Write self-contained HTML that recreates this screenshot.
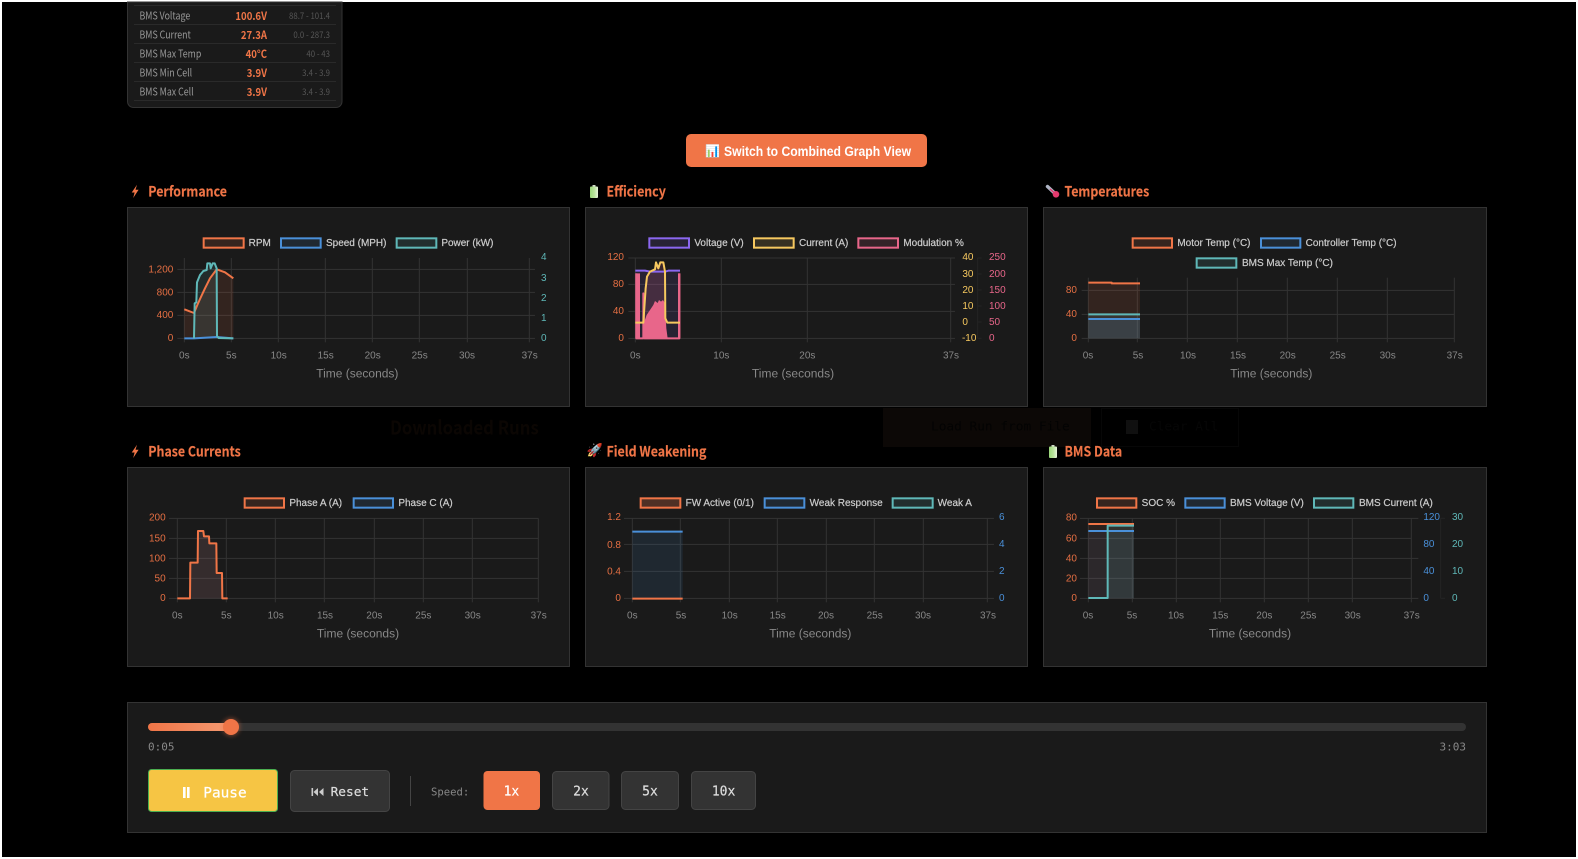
<!DOCTYPE html>
<html><head><meta charset="utf-8"><title>Dashboard</title>
<style>
html,body{margin:0;padding:0;background:#fff;width:1578px;height:859px;overflow:hidden}
svg{position:absolute;left:0;top:0;display:block}
text{font-family:"Liberation Sans",sans-serif;dominant-baseline:central}
.g line{stroke:#333;stroke-width:3}
.g .f{stroke:#242424}
.lg,.t,.lo,.ry,.rp,.rt,.rb{transform:translateY(3px)}
.lg{font-size:30px;fill:#ccc;stroke:#ccc;stroke-width:.6px}
.t{font-size:30px;fill:#888;text-anchor:middle}
.ti{font-size:36px;fill:#888;text-anchor:middle}
.lo{font-size:30px;fill:#e56f43;text-anchor:end}
.ry{font-size:30px;fill:#f6c85f}
.rp{font-size:30px;fill:#e8668a}
.rt{font-size:30px;fill:#5fb8b8}
.rb{font-size:30px;fill:#4a90d9}
.h{font-family:"Noto Sans CJK SC","Liberation Sans",sans-serif;font-size:14px;font-weight:700;fill:#f07547;stroke:#f07547;stroke-width:.15px}
.e{font-family:"Noto Color Emoji","Liberation Sans",sans-serif;font-size:13px}
.s{font-family:"Noto Sans CJK SC","Liberation Sans",sans-serif;font-size:10.500px;fill:#999}
.v{font-family:"Noto Sans CJK SC","Liberation Sans",sans-serif;font-size:11px;font-weight:700;fill:#f07547;text-anchor:end}
.r{font-family:"Noto Sans CJK SC","Liberation Sans",sans-serif;font-size:9px;fill:#555;text-anchor:end}
.m{font-family:"DejaVu Sans Mono",monospace}
.l{fill:none;stroke-width:6;stroke-linejoin:round}
</style></head><body>
<svg width="1578" height="859" viewBox="0 0 1578 859" xmlns="http://www.w3.org/2000/svg">
<defs>
<linearGradient id="f" x1="0" x2="1" y1="0" y2="0"><stop offset="0" stop-color="#f07547"/><stop offset="1" stop-color="#f49a72"/></linearGradient>
<linearGradient id="bat" x1="0" x2="1" y1="0" y2="0"><stop offset="0" stop-color="#9bd77a"/><stop offset=".55" stop-color="#b9e49c"/><stop offset="1" stop-color="#e8f3dd"/></linearGradient>
<filter id="gl" x="-50%" y="-50%" width="200%" height="200%"><feGaussianBlur stdDeviation="2"/></filter>
</defs>
<rect x="2" y="2" width="1574" height="855" fill="#000"/>

<!-- faint layer -->
<g>
<text transform="translate(390,427) scale(.88,1)" x="0" y="0" style="font-size:19px;fill:#0b0603;font-family:'Noto Sans CJK SC',sans-serif;font-weight:600">Downloaded Runs</text>
<rect x="883" y="408" width="208" height="39" fill="#0c0806"/>
<text x="931" y="427" class="m" style="font-size:12.800px;fill:#030303">Load Run from File</text>
<rect x="1101.500" y="408.500" width="137" height="38" fill="none" stroke="#070707"/>
<text x="1149" y="427" class="m" style="font-size:12.800px;fill:#060606">Clear All</text>
<rect x="1126" y="420" width="12" height="14" fill="#101010"/>
</g>

<!-- top stats panel -->
<path d="M127.500 2V101.500a6 6 0 0 0 6 6H336a6 6 0 0 0 6-6V2Z" fill="#1a1a1a" stroke="#333"/>
<g stroke="#2a2a2a"><line x1="134" x2="336" y1="5.500" y2="5.500"/><line x1="134" x2="336" y1="24.500" y2="24.500"/><line x1="134" x2="336" y1="43.500" y2="43.500"/><line x1="134" x2="336" y1="62.500" y2="62.500"/><line x1="134" x2="336" y1="81.500" y2="81.500"/><line x1="134" x2="336" y1="100.500" y2="100.500"/></g>
<g transform="translate(139.500,-1) scale(.84,1)"><text class="s" x="0" y="16">BMS Voltage</text><text class="s" x="0" y="35">BMS Current</text><text class="s" x="0" y="54">BMS Max Temp</text><text class="s" x="0" y="73">BMS Min Cell</text><text class="s" x="0" y="92">BMS Max Cell</text></g>
<g transform="translate(267,-1) scale(.87,1)"><text class="v" x="0" y="16">100.6V</text><text class="v" x="0" y="35">27.3A</text><text class="v" x="0" y="54">40°C</text><text class="v" x="0" y="73">3.9V</text><text class="v" x="0" y="92">3.9V</text></g>
<g transform="translate(330,0) scale(.87,1)"><text class="r" x="0" y="16">88.7 - 101.4</text><text class="r" x="0" y="35">0.0 - 287.3</text><text class="r" x="0" y="54">40 - 43</text><text class="r" x="0" y="73">3.4 - 3.9</text><text class="r" x="0" y="92">3.4 - 3.9</text></g>

<!-- switch button -->
<rect x="686" y="134" width="241" height="33" rx="5" fill="#f07547"/>
<text class="e" x="705" y="151" style="font-size:12px">📊</text>
<text transform="translate(724,151) scale(.87,1)" x="0" y="0" style="font-size:14px;font-weight:700;fill:#fff">Switch to Combined Graph View</text>

<!-- section titles -->
<path d="M137 184.700L131.700 192.500H134.600L133.200 198L138.600 189.700H135.500Z" fill="#f07547"/>
<text class="h" x="0" y="0" transform="translate(148.300,190.500) scale(.885,1)">Performance</text>
<rect x="592.500" y="185" width="3" height="2" fill="#cfd8c8"/><rect x="590" y="186.500" width="8" height="11.500" rx="1" fill="url(#bat)"/>
<text class="h" x="0" y="0" transform="translate(606.500,190.500) scale(.885,1)">Efficiency</text>
<line x1="1047.500" y1="186.500" x2="1055" y2="193.500" stroke="#aeb4c4" stroke-width="3.400" stroke-linecap="round"/><line x1="1050" y1="189" x2="1055" y2="193.500" stroke="#e33a6e" stroke-width="1.400"/><circle cx="1056" cy="194.300" r="3.300" fill="#e33a6e"/>
<text class="h" x="0" y="0" transform="translate(1064.500,190.500) scale(.885,1)">Temperatures</text>
<path d="M137 444.700L131.700 452.500H134.600L133.200 458L138.600 449.700H135.500Z" fill="#f07547"/>
<text class="h" x="0" y="0" transform="translate(148.300,450.500) scale(.885,1)">Phase Currents</text>
<text class="e" x="586.500" y="451">🚀</text>
<text class="h" x="0" y="0" transform="translate(606.500,450.500) scale(.885,1)">Field Weakening</text>
<rect x="1051.500" y="445" width="3" height="2" fill="#cfd8c8"/><rect x="1049" y="446.500" width="8" height="11.500" rx="1" fill="url(#bat)"/>
<text class="h" x="0" y="0" transform="translate(1064.500,450.500) scale(.885,1)">BMS Data</text>

<!-- panels -->
<g fill="#1a1a1a" stroke="#333">
<rect x="127.500" y="207.500" width="442" height="199"/><rect x="585.500" y="207.500" width="442" height="199"/><rect x="1043.500" y="207.500" width="443" height="199"/>
<rect x="127.500" y="467.500" width="442" height="199"/><rect x="585.500" y="467.500" width="442" height="199"/><rect x="1043.500" y="467.500" width="443" height="199"/>
</g>

<!-- chart 1 -->
<g transform="translate(120,175) scale(.33333)">
<g class="g"><line x1="193" x2="193" y1="249" y2="502"/><line x1="334" x2="334" y1="249" y2="502"/><line x1="475" x2="475" y1="249" y2="502"/><line x1="616" x2="616" y1="249" y2="502"/><line x1="757" x2="757" y1="249" y2="502"/><line x1="898" x2="898" y1="249" y2="502"/><line x1="1042" x2="1042" y1="249" y2="502"/><line x1="1228" x2="1228" y1="249" y2="502"/>
<line x1="172" x2="1245" y1="283" y2="283"/><line x1="172" x2="1245" y1="352" y2="352"/><line x1="172" x2="1245" y1="421" y2="421"/><line x1="172" x2="1245" y1="490" y2="490"/></g>
<rect x="251" y="190" width="120" height="28" fill="#f07547" fill-opacity=".13" stroke="#f07547" stroke-width="6"/><text class="lg" x="386" y="203">RPM</text>
<rect x="483" y="190" width="119" height="28" fill="#4a90d9" fill-opacity=".13" stroke="#4a90d9" stroke-width="6"/><text class="lg" x="618" y="203">Speed (MPH)</text>
<rect x="830" y="190" width="119" height="28" fill="#5fb8b8" fill-opacity=".13" stroke="#5fb8b8" stroke-width="6"/><text class="lg" x="964" y="203">Power (kW)</text>
<path d="M193 490V403L222 414L232 390L255 340L290 283L315 292L340 310V490Z" fill="#f07547" fill-opacity=".12"/>
<path d="M222 490L224 385L229 382L231 322L240 300L250 288L260 285V265H270V280L278 265H284L290 280L291 490Z" fill="#5fb8b8" fill-opacity=".12"/>
<path class="l" stroke="#f07547" d="M193 403L222 414L232 390L240 372L255 340L270 310L290 283L315 292L340 310"/>
<path class="l" stroke="#4a90d9" d="M193 490H222L290 486L340 490"/>
<path class="l" stroke="#5fb8b8" d="M222 490L224 385L229 382L231 322L240 300L250 288L260 285L262 265H270L272 280L278 265H284L290 280L291 483L296 489L340 490"/>
<text class="lo" x="160" y="282">1,200</text><text class="lo" x="160" y="351">800</text><text class="lo" x="160" y="419">400</text><text class="lo" x="160" y="488">0</text>
<text class="rt" x="1263" y="245">4</text><text class="rt" x="1263" y="308">3</text><text class="rt" x="1263" y="368">2</text><text class="rt" x="1263" y="428">1</text><text class="rt" x="1263" y="487">0</text>
<text class="t" x="193" y="540">0s</text><text class="t" x="334" y="540">5s</text><text class="t" x="476" y="540">10s</text><text class="t" x="617" y="540">15s</text><text class="t" x="758" y="540">20s</text><text class="t" x="899" y="540">25s</text><text class="t" x="1041" y="540">30s</text><text class="t" x="1229" y="540">37s</text>
<text class="ti" x="712" y="596">Time (seconds)</text>
</g>

<!-- chart 2 -->
<g transform="translate(575,175) scale(.33333)">
<g class="g"><line x1="181" x2="181" y1="249" y2="502"/><line x1="439" x2="439" y1="249" y2="502"/><line x1="697" x2="697" y1="249" y2="502"/><line x1="1127" x2="1127" y1="249" y2="502"/>
<line x1="160" x2="1140" y1="249" y2="249"/><line x1="160" x2="1140" y1="328" y2="328"/><line x1="160" x2="1140" y1="409" y2="409"/><line x1="160" x2="1140" y1="490" y2="490"/>
<line class="f" x1="1208" x2="1220" y1="249" y2="249"/><line class="f" x1="1208" x2="1220" y1="297" y2="297"/><line class="f" x1="1208" x2="1220" y1="345" y2="345"/><line class="f" x1="1208" x2="1220" y1="393" y2="393"/><line class="f" x1="1208" x2="1220" y1="441" y2="441"/><line class="f" x1="1208" x2="1220" y1="490" y2="490"/><line class="f" x1="1208" x2="1208" y1="249" y2="490"/></g>
<rect x="223" y="190" width="119" height="28" fill="#8b67f0" fill-opacity=".13" stroke="#8b67f0" stroke-width="6"/><text class="lg" x="358" y="203">Voltage (V)</text>
<rect x="537" y="190" width="119" height="28" fill="#f6c85f" fill-opacity=".13" stroke="#f6c85f" stroke-width="6"/><text class="lg" x="672" y="203">Current (A)</text>
<rect x="850" y="190" width="119" height="28" fill="#e8668a" fill-opacity=".13" stroke="#e8668a" stroke-width="6"/><text class="lg" x="985" y="203">Modulation %</text>
<path d="M181 287H315V490H181Z" fill="#8b67f0" fill-opacity=".12"/>
<path d="M208 490V340L216 305L225 290L240 283L243 262L250 280L256 262H265L270 290L272 490Z" fill="#e8668a" fill-opacity=".16"/>
<path d="M206 490L208 440L215 420L225 405L235 390L240 378L248 384L252 375L258 380L264 375L270 385L274 460L278 490Z" fill="#e8668a"/>
<path class="l" stroke="#e8668a" d="M184 295V490H205V355L208 490H278L281 490H313V295"/>
<path d="M181 295H195V490H181Z" fill="#e8668a"/>
<path d="M309 295H316V490H309Z" fill="#e8668a"/>
<path class="l" stroke="#8b67f0" d="M181 287H210L225 290H270L280 287H315"/>
<path class="l" stroke="#f6c85f" d="M181 443H205L212 340L216 305L225 290L240 283L243 262L250 280L256 262H265L270 290L271 430L277 443H315"/>
<text class="lo" x="147" y="245">120</text><text class="lo" x="147" y="326">80</text><text class="lo" x="147" y="407">40</text><text class="lo" x="147" y="488">0</text>
<text class="ry" x="1162" y="245">40</text><text class="ry" x="1162" y="296">30</text><text class="ry" x="1162" y="344">20</text><text class="ry" x="1162" y="392">10</text><text class="ry" x="1162" y="440">0</text><text class="ry" x="1161" y="488">-10</text>
<text class="rp" x="1242" y="245">250</text><text class="rp" x="1242" y="296">200</text><text class="rp" x="1242" y="344">150</text><text class="rp" x="1242" y="392">100</text><text class="rp" x="1242" y="440">50</text><text class="rp" x="1242" y="488">0</text>
<text class="t" x="181" y="540">0s</text><text class="t" x="439" y="540">10s</text><text class="t" x="697" y="540">20s</text><text class="t" x="1128" y="540">37s</text>
<text class="ti" x="654" y="596">Time (seconds)</text>
</g>

<!-- chart 3 -->
<g transform="translate(1030,175) scale(.33333)">
<g class="g"><line x1="175" x2="175" y1="308" y2="502"/><line x1="322" x2="322" y1="308" y2="502"/><line x1="472" x2="472" y1="308" y2="502"/><line x1="622" x2="622" y1="308" y2="502"/><line x1="772" x2="772" y1="308" y2="502"/><line x1="922" x2="922" y1="308" y2="502"/><line x1="1072" x2="1072" y1="308" y2="502"/><line x1="1273" x2="1273" y1="308" y2="502"/>
<line x1="155" x2="1273" y1="346" y2="346"/><line x1="155" x2="1273" y1="418" y2="418"/><line x1="155" x2="1273" y1="490" y2="490"/></g>
<rect x="308" y="190" width="118" height="28" fill="#f07547" fill-opacity=".13" stroke="#f07547" stroke-width="6"/><text class="lg" x="442" y="203">Motor Temp (°C)</text>
<rect x="693" y="190" width="118" height="28" fill="#4a90d9" fill-opacity=".13" stroke="#4a90d9" stroke-width="6"/><text class="lg" x="827" y="203">Controller Temp (°C)</text>
<rect x="500" y="250" width="119" height="28" fill="#5fb8b8" fill-opacity=".13" stroke="#5fb8b8" stroke-width="6"/><text class="lg" x="636" y="263">BMS Max Temp (°C)</text>
<path d="M175 323H330V490H175Z" fill="#f07547" fill-opacity=".12"/>
<path d="M175 418H330V490H175Z" fill="#5fb8b8" fill-opacity=".12"/>
<path d="M175 432H330V490H175Z" fill="#4a90d9" fill-opacity=".12"/>
<path class="l" stroke="#f07547" d="M175 323H245V325H330"/>
<path class="l" stroke="#5fb8b8" d="M175 418H330"/>
<path class="l" stroke="#4a90d9" d="M175 432H330"/>
<text class="lo" x="141" y="344">80</text><text class="lo" x="141" y="416">40</text><text class="lo" x="141" y="488">0</text>
<text class="t" x="174" y="540">0s</text><text class="t" x="324" y="540">5s</text><text class="t" x="474" y="540">10s</text><text class="t" x="624" y="540">15s</text><text class="t" x="773" y="540">20s</text><text class="t" x="923" y="540">25s</text><text class="t" x="1073" y="540">30s</text><text class="t" x="1274" y="540">37s</text>
<text class="ti" x="724" y="596">Time (seconds)</text>
</g>

<!-- chart 4 -->
<g transform="translate(120,435) scale(.33333)">
<g class="g"><line x1="172" x2="172" y1="250" y2="502"/><line x1="319" x2="319" y1="250" y2="502"/><line x1="466" x2="466" y1="250" y2="502"/><line x1="613" x2="613" y1="250" y2="502"/><line x1="763" x2="763" y1="250" y2="502"/><line x1="910" x2="910" y1="250" y2="502"/><line x1="1057" x2="1057" y1="250" y2="502"/><line x1="1255" x2="1255" y1="250" y2="502"/>
<line x1="147" x2="1255" y1="250" y2="250"/><line x1="147" x2="1255" y1="310" y2="310"/><line x1="147" x2="1255" y1="370" y2="370"/><line x1="147" x2="1255" y1="430" y2="430"/><line x1="147" x2="1255" y1="490" y2="490"/></g>
<rect x="374" y="190" width="118" height="28" fill="#f07547" fill-opacity=".13" stroke="#f07547" stroke-width="6"/><text class="lg" x="508" y="203">Phase A (A)</text>
<rect x="701" y="190" width="118" height="28" fill="#4a90d9" fill-opacity=".13" stroke="#4a90d9" stroke-width="6"/><text class="lg" x="835" y="203">Phase C (A)</text>
<path d="M210 490V383H233V288H250L252 304H267V325H289V414H306V490Z" fill="#f07547" fill-opacity=".12"/>
<path d="M210 490V383H233V288H250L252 304H267V325H289V414H306V490Z" fill="#4a90d9" fill-opacity=".08"/>
<path class="l" stroke="#f07547" d="M172 490H210L211 383H233L234 288H250L252 304H267L268 325H289L290 414H306L307 490H323"/>
<text class="lo" x="137" y="246">200</text><text class="lo" x="137" y="309">150</text><text class="lo" x="137" y="369">100</text><text class="lo" x="137" y="429">50</text><text class="lo" x="137" y="488">0</text>
<text class="t" x="172" y="540">0s</text><text class="t" x="319" y="540">5s</text><text class="t" x="467" y="540">10s</text><text class="t" x="615" y="540">15s</text><text class="t" x="763" y="540">20s</text><text class="t" x="910" y="540">25s</text><text class="t" x="1058" y="540">30s</text><text class="t" x="1256" y="540">37s</text>
<text class="ti" x="714" y="596">Time (seconds)</text>
</g>

<!-- chart 5 -->
<g transform="translate(575,435) scale(.33333)">
<g class="g"><line x1="172" x2="172" y1="250" y2="502"/><line x1="316" x2="316" y1="250" y2="502"/><line x1="463" x2="463" y1="250" y2="502"/><line x1="607" x2="607" y1="250" y2="502"/><line x1="754" x2="754" y1="250" y2="502"/><line x1="898" x2="898" y1="250" y2="502"/><line x1="1045" x2="1045" y1="250" y2="502"/><line x1="1237" x2="1237" y1="250" y2="502"/>
<line x1="147" x2="1257" y1="250" y2="250"/><line x1="147" x2="1257" y1="328" y2="328"/><line x1="147" x2="1257" y1="409" y2="409"/><line x1="147" x2="1257" y1="490" y2="490"/></g>
<rect x="197" y="190" width="119" height="28" fill="#f07547" fill-opacity=".25" stroke="#f07547" stroke-width="6"/><text class="lg" x="332" y="203">FW Active (0/1)</text>
<rect x="569" y="190" width="119" height="28" fill="#4a90d9" fill-opacity=".13" stroke="#4a90d9" stroke-width="6"/><text class="lg" x="704" y="203">Weak Response</text>
<rect x="953" y="190" width="120" height="28" fill="#5fb8b8" fill-opacity=".13" stroke="#5fb8b8" stroke-width="6"/><text class="lg" x="1088" y="203">Weak A</text>
<path d="M172 290H323V490H172Z" fill="#4a90d9" fill-opacity=".12"/>
<path class="l" stroke="#4a90d9" d="M172 290H323"/>
<path class="l" stroke="#f07547" d="M172 491H323"/>
<text class="lo" x="138" y="245">1.2</text><text class="lo" x="138" y="328">0.8</text><text class="lo" x="138" y="408">0.4</text><text class="lo" x="138" y="488">0</text>
<text class="rb" x="1272" y="245">6</text><text class="rb" x="1272" y="326">4</text><text class="rb" x="1272" y="406">2</text><text class="rb" x="1272" y="488">0</text>
<text class="t" x="172" y="540">0s</text><text class="t" x="318" y="540">5s</text><text class="t" x="464" y="540">10s</text><text class="t" x="608" y="540">15s</text><text class="t" x="753" y="540">20s</text><text class="t" x="899" y="540">25s</text><text class="t" x="1044" y="540">30s</text><text class="t" x="1239" y="540">37s</text>
<text class="ti" x="706" y="596">Time (seconds)</text>
</g>

<!-- chart 6 -->
<g transform="translate(1030,435) scale(.33333)">
<g class="g"><line x1="175" x2="175" y1="250" y2="502"/><line x1="307" x2="307" y1="250" y2="502"/><line x1="439" x2="439" y1="250" y2="502"/><line x1="571" x2="571" y1="250" y2="502"/><line x1="703" x2="703" y1="250" y2="502"/><line x1="835" x2="835" y1="250" y2="502"/><line x1="967" x2="967" y1="250" y2="502"/><line x1="1144" x2="1144" y1="250" y2="502"/>
<line x1="150" x2="1165" y1="250" y2="250"/><line x1="150" x2="1144" y1="310" y2="310"/><line x1="150" x2="1165" y1="370" y2="370"/><line x1="150" x2="1144" y1="430" y2="430"/><line x1="150" x2="1165" y1="490" y2="490"/>
<line class="f" x1="1232" x2="1245" y1="250" y2="250"/><line class="f" x1="1232" x2="1245" y1="490" y2="490"/><line class="f" x1="1232" x2="1232" y1="250" y2="490"/></g>
<rect x="201" y="190" width="118" height="28" fill="#f07547" fill-opacity=".13" stroke="#f07547" stroke-width="6"/><text class="lg" x="335" y="203">SOC %</text>
<rect x="466" y="190" width="118" height="28" fill="#4a90d9" fill-opacity=".13" stroke="#4a90d9" stroke-width="6"/><text class="lg" x="600" y="203">BMS Voltage (V)</text>
<rect x="852" y="190" width="118" height="28" fill="#5fb8b8" fill-opacity=".13" stroke="#5fb8b8" stroke-width="6"/><text class="lg" x="987" y="203">BMS Current (A)</text>
<path d="M175 267H312V490H175Z" fill="#f07547" fill-opacity=".08"/>
<path d="M175 288H312V490H175Z" fill="#4a90d9" fill-opacity=".08"/>
<path d="M233 272H312V490H233Z" fill="#5fb8b8" fill-opacity=".12"/>
<path class="l" stroke="#f07547" d="M175 267H312"/>
<path class="l" stroke="#4a90d9" d="M175 288H312"/>
<path class="l" stroke="#5fb8b8" d="M175 489H233V272H312"/>
<text class="lo" x="141" y="246">80</text><text class="lo" x="141" y="309">60</text><text class="lo" x="141" y="369">40</text><text class="lo" x="141" y="429">20</text><text class="lo" x="141" y="488">0</text>
<text class="rb" x="1180" y="245">120</text><text class="rb" x="1180" y="326">80</text><text class="rb" x="1180" y="407">40</text><text class="rb" x="1180" y="488">0</text>
<text class="rt" x="1266" y="245">30</text><text class="rt" x="1266" y="326">20</text><text class="rt" x="1266" y="407">10</text><text class="rt" x="1266" y="488">0</text>
<text class="t" x="174" y="540">0s</text><text class="t" x="306" y="540">5s</text><text class="t" x="438" y="540">10s</text><text class="t" x="571" y="540">15s</text><text class="t" x="703" y="540">20s</text><text class="t" x="835" y="540">25s</text><text class="t" x="968" y="540">30s</text><text class="t" x="1145" y="540">37s</text>
<text class="ti" x="660" y="596">Time (seconds)</text>
</g>

<!-- controls -->
<rect x="127.500" y="702.500" width="1359" height="130" fill="#1a1a1a" stroke="#333"/>
<rect x="148" y="723" width="1318" height="8" rx="4" fill="#333"/>
<rect x="148" y="723" width="83" height="8" rx="4" fill="url(#f)"/>
<circle cx="231" cy="727" r="9" fill="#f07547" opacity=".4" filter="url(#gl)"/>
<circle cx="231" cy="727" r="8" fill="#f07547"/>
<text class="m" x="148" y="747" style="font-size:11px;fill:#888">0:05</text>
<text class="m" x="1466" y="747" style="font-size:11px;fill:#888;text-anchor:end">3:03</text>

<rect x="148.500" y="769.500" width="129" height="42" rx="3" fill="#f6c544" stroke="#4caf50"/>
<rect x="183" y="787" width="2.600" height="11" fill="#fff"/><rect x="187" y="787" width="2.600" height="11" fill="#fff"/>
<text class="m" x="203.300" y="793.500" style="font-size:14.400px;fill:#fff;stroke:#fff;stroke-width:.25px">Pause</text>

<rect x="290.500" y="770.500" width="99" height="41" rx="4" fill="#333" stroke="#444"/>
<path d="M311.500 788h1.600v8h-1.600zM318 788v8l-4.500-4zM323.500 788v8l-4.500-4z" fill="#ccc"/>
<text class="m" x="330.600" y="792.500" style="font-size:12.800px;fill:#ddd;stroke:#ddd;stroke-width:.2px">Reset</text>

<line x1="410.500" x2="410.500" y1="776" y2="806" stroke="#444"/>
<text class="m" x="431" y="792.500" style="font-size:10.600px;fill:#888">Speed:</text>

<rect x="483.500" y="771" width="56.500" height="39" rx="4" fill="#f07547"/>
<text class="m" x="511.400" y="792" style="font-size:13px;fill:#fff;stroke:#fff;stroke-width:.2px;text-anchor:middle">1x</text>
<rect x="552.500" y="771.500" width="56.500" height="38" rx="4" fill="#333" stroke="#444"/>
<text class="m" x="581" y="792" style="font-size:13px;fill:#ddd;stroke:#ddd;stroke-width:.2px;text-anchor:middle">2x</text>
<rect x="621.500" y="771.500" width="57" height="38" rx="4" fill="#333" stroke="#444"/>
<text class="m" x="650" y="792" style="font-size:13px;fill:#ddd;stroke:#ddd;stroke-width:.2px;text-anchor:middle">5x</text>
<rect x="691.500" y="771.500" width="64" height="38" rx="4" fill="#333" stroke="#444"/>
<text class="m" x="723.600" y="792" style="font-size:13px;fill:#ddd;stroke:#ddd;stroke-width:.2px;text-anchor:middle">10x</text>
</svg>
</body></html>
